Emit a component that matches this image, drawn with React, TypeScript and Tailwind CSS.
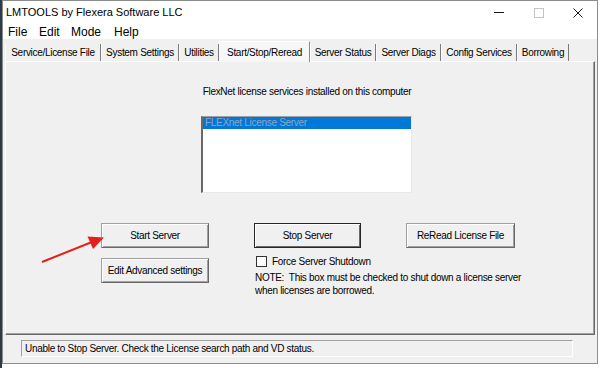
import React from "react";

const tabs: { label: string; w: string; active?: boolean }[] = [
  { label: "Service/License File", w: "w-[96px]" },
  { label: "System Settings", w: "w-[78px]" },
  { label: "Utilities", w: "w-[40px]" },
  { label: "Start/Stop/Reread", w: "w-[91px]", active: true },
  { label: "Server Status", w: "w-[66px]" },
  { label: "Server Diags", w: "w-[65px]" },
  { label: "Config Services", w: "w-[76px]" },
  { label: "Borrowing", w: "w-[52px]" },
];

function Btn({ children, def, w }: { children: React.ReactNode; def?: boolean; w: string }) {
  return (
    <div
      className={
        def
          ? `${w} h-[25px] shrink-0 flex items-center justify-center bg-[#f0f0f0] border border-[#262626] shadow-[inset_1px_1px_0_#ffffff,inset_-1px_-1px_0_#696969]`
          : `${w} h-[25px] shrink-0 flex items-center justify-center bg-[#f0f0f0] border border-[#a0a0a0] border-r-[#696969] border-b-[#696969] shadow-[inset_1px_1px_0_#ffffff,inset_-1px_-1px_0_#a0a0a0]`
      }
    >
      <span className="text-[10px] tracking-[-0.3px] leading-[13px] text-black whitespace-nowrap">{children}</span>
    </div>
  );
}

export default function App() {
  return (
    <div className="relative w-[600px] h-[368px] flex bg-white overflow-hidden font-['Liberation_Sans',Arial,sans-serif]">
      <div className="w-[2px] h-full bg-[#2f3b44]" />
      <div className="w-[596px] h-[364px] border border-[#8c8c8c] bg-[#f0f0f0] flex flex-col">
        {/* title + menu */}
        <div className="h-[38px] bg-white flex flex-col">
          <div className="h-[23px] flex items-center">
            <span className="ml-[3px] text-[11px] text-black whitespace-nowrap">LMTOOLS by Flexera Software LLC</span>
            <div className="ml-auto flex h-full">
              <div className="w-[40px] h-full flex items-center justify-center">
                <div className="w-[10px] h-[1px] bg-[#1a1a1a]" />
              </div>
              <div className="w-[40px] h-full flex items-center justify-center">
                <div className="w-[10px] h-[10px] border border-[#c4c4c4]" />
              </div>
              <div className="w-[38px] h-full flex items-center justify-center">
                <svg width="10" height="10" viewBox="0 0 10 10">
                  <path d="M0.5 0.5 L9.5 9.5 M9.5 0.5 L0.5 9.5" stroke="#1a1a1a" strokeWidth="1" />
                </svg>
              </div>
            </div>
          </div>
          <div className="h-[15px] flex items-center text-[12px] text-black">
            <span className="ml-[5px] w-[31px]">File</span>
            <span className="w-[32px]">Edit</span>
            <span className="w-[43px]">Mode</span>
            <span>Help</span>
          </div>
        </div>

        {/* tabs */}
        <div className="h-[22px] flex items-end pl-[2px]">
          {tabs.map((t) =>
            t.active ? (
              <div
                key={t.label}
                className={`${t.w} relative z-10 -mb-[1px] h-[21px] flex items-center justify-center bg-[#f7f7f7] border-t border-l border-white border-r border-r-[#8a8a8a]`}
              >
                <span className="text-[10px] tracking-[-0.3px] leading-[13px] whitespace-nowrap text-black">{t.label}</span>
              </div>
            ) : (
              <div
                key={t.label}
                className={`${t.w} h-[17px] flex items-center justify-center bg-[#f0f0f0] border-l border-l-[#fbfbfb] border-r border-r-[#7a7a7a]`}
              >
                <span className="text-[10px] tracking-[-0.3px] leading-[13px] whitespace-nowrap text-black">{t.label}</span>
              </div>
            )
          )}
        </div>

        {/* panel */}
        <div className="ml-[2px] w-[590px] h-[274px] bg-[#f0f0f0] border border-t-white border-l-white border-r-[#696969] border-b-[#696969] shadow-[inset_-1px_-1px_0_#a0a0a0] flex flex-col">
          <div className="ml-[195px] w-[212px] flex flex-col items-center">
            <div className="mt-[23px] text-[10px] tracking-[-0.3px] leading-[13px] whitespace-nowrap text-black">
              FlexNet license services installed on this computer
            </div>
          </div>
          <div className="ml-[195px] mt-[18px] w-[211px] h-[77px] bg-white border border-t-[#a0a0a0] border-l-2 border-l-[#696969] border-r-[#e8e8e8] border-b-[#e8e8e8] flex flex-col">
            <div className="h-[12px] bg-[#0078d7] flex items-center pl-[2px]">
              <span className="text-[10px] tracking-[-0.3px] leading-[12px] text-[#8ea4c8] whitespace-nowrap">FLEXnet License Server</span>
            </div>
          </div>

          <div className="mt-[30px] ml-[95px] flex gap-[45px]">
            <div className="w-[108px] shrink-0 flex flex-col gap-[10px]">
              <Btn w="w-[108px]">Start Server</Btn>
              <Btn w="w-[108px]">Edit Advanced settings</Btn>
            </div>
            <div className="w-[107px] shrink-0 flex flex-col">
              <Btn w="w-[107px]" def>
                Stop Server
              </Btn>
              <div className="mt-[7px] ml-[2px] h-[13px] flex items-center gap-[5px]">
                <div className="w-[11px] h-[11px] shrink-0 bg-white border border-[#333333]" />
                <span className="text-[10px] tracking-[-0.3px] leading-[13px] whitespace-nowrap text-black">Force Server Shutdown</span>
              </div>
              <div className="mt-[3px] ml-[1px] text-[10px] tracking-[-0.3px] leading-[13px] whitespace-pre text-black">
                {"NOTE:  This box must be checked to shut down a license server\nwhen licenses are borrowed."}
              </div>
            </div>
            <div className="w-[109px] shrink-0">
              <Btn w="w-[109px]">ReRead License File</Btn>
            </div>
          </div>
        </div>

        {/* status */}
        <div className="mt-[5px] ml-[18px] w-[552px] h-[17px] border border-t-[#a0a0a0] border-l-[#a0a0a0] border-r-white border-b-white flex items-center pl-[3px]">
          <span className="text-[10px] tracking-[-0.3px] leading-[13px] whitespace-nowrap text-black">
            Unable to Stop Server. Check the License search path and VD status.
          </span>
        </div>
      </div>
      <div className="w-[2px] h-full bg-white" />

      {/* red annotation arrow */}
      <svg className="absolute left-0 top-0 pointer-events-none" width="600" height="368" viewBox="0 0 600 368">
        <line x1="42" y1="262" x2="92" y2="242" stroke="#e3201c" strokeWidth="2" />
        <polygon points="104,237.5 87.5,236.5 93,249" fill="#e3201c" />
      </svg>
    </div>
  );
}
